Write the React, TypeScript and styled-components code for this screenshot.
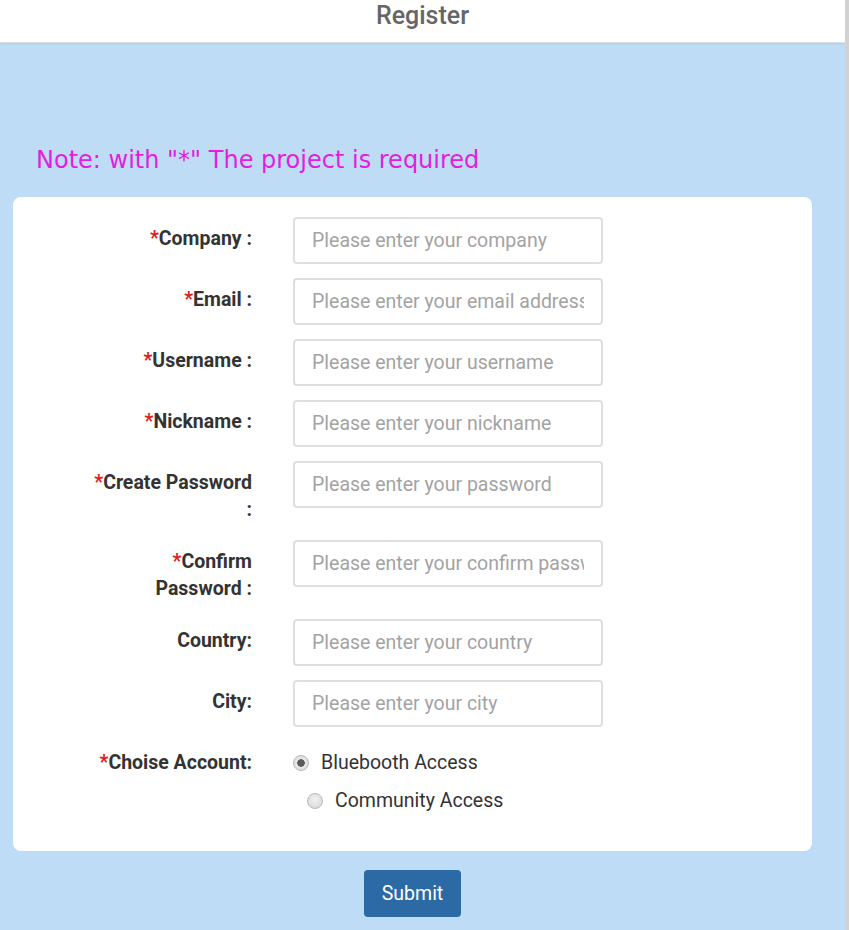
import styled, { createGlobalStyle } from "styled-components";

const GlobalStyle = createGlobalStyle`
  html, body {
    margin: 0;
    padding: 0;
    background: #ffffff;
  }
  * {
    box-sizing: border-box;
  }
`;

const Page = styled.div`
  width: 849px;
  min-height: 930px;
  border-right: 4px solid #d2d2d2;
  background-color: #bedcf6;
  font-family: Roboto, "Liberation Sans", sans-serif;
  overflow: hidden;
`;

const Header = styled.header`
  height: 43px;
  background-color: #ffffff;
  border-bottom: 1px solid #d9dfe5;
  box-shadow: 0 1px 2px rgba(0, 0, 0, 0.06);
  display: flex;
  align-items: flex-start;
  justify-content: center;
  padding-top: 1px;
`;

const Title = styled.h1`
  margin: 0;
  font-size: 25px;
  line-height: 30px;
  font-weight: 500;
  color: #666666;
`;

const Main = styled.main`
  padding: 98px 33px 0 13px;
`;

const Note = styled.p`
  margin: 0 0 18px 23px;
  font-family: "DejaVu Sans", Tahoma, sans-serif;
  font-size: 24px;
  line-height: 38px;
  color: #e21ee0;
`;

const Card = styled.div`
  background-color: #ffffff;
  border-radius: 8px;
  padding: 20px 0 24px;
`;

const Row = styled.div`
  display: grid;
  grid-template-columns: 239px 310px;
  column-gap: 41px;
  align-items: start;
  margin-bottom: 14px;
`;

const Label = styled.label`
  text-align: right;
  font-size: 19.5px;
  font-weight: 700;
  color: #333333;
  line-height: 27px;
  padding: 8px 0 3px 76px;
`;

const Star = styled.span`
  color: #d9201a;
`;

const Input = styled.input`
  width: 310px;
  height: 47px;
  padding: 0 17px;
  border: 2px solid #dedede;
  border-radius: 4px;
  font-family: Roboto, "Liberation Sans", sans-serif;
  font-size: 19.5px;
  color: #333333;
  background-color: #ffffff;
  outline: none;

  &::placeholder {
    color: #a3a3a3;
  }
`;

const RadioGroup = styled.div`
  display: flex;
  flex-direction: column;
  gap: 14px;
  padding-top: 10px;
`;

const RadioOption = styled.label<{ $indent?: number }>`
  display: flex;
  align-items: center;
  gap: 12px;
  margin-left: ${(p) => p.$indent ?? 0}px;
  font-size: 19.5px;
  line-height: 24px;
  color: #333333;
`;

const Radio = styled.input`
  appearance: none;
  margin: 0;
  width: 16px;
  height: 16px;
  border-radius: 50%;
  border: 1px solid #b9b9b9;
  background: radial-gradient(circle at 50% 40%, #f2f2f2, #d4d4d4);

  &:checked {
    background: radial-gradient(
      circle,
      #5a5a5a 0 3.5px,
      #eaeaea 4px,
      #d2d2d2 100%
    );
  }
`;

const Actions = styled.div`
  display: flex;
  justify-content: center;
  padding: 19px 0 20px;
`;

const SubmitButton = styled.button`
  width: 97px;
  height: 47px;
  border: none;
  border-radius: 4px;
  background-color: #2c6aa5;
  color: #ffffff;
  font-family: Roboto, "Liberation Sans", sans-serif;
  font-size: 19.5px;
  cursor: pointer;
`;

type Field = {
  label: string;
  placeholder: string;
  required?: boolean;
  type?: string;
};

const fields: Field[] = [
  { label: "Company :", placeholder: "Please enter your company", required: true },
  { label: "Email :", placeholder: "Please enter your email address", required: true },
  { label: "Username :", placeholder: "Please enter your username", required: true },
  { label: "Nickname :", placeholder: "Please enter your nickname", required: true },
  { label: "Create Password :", placeholder: "Please enter your password", required: true, type: "password" },
  { label: "Confirm Password :", placeholder: "Please enter your confirm password", required: true, type: "password" },
  { label: "Country:", placeholder: "Please enter your country" },
  { label: "City:", placeholder: "Please enter your city" },
];

const App = () => {
  return (
    <>
      <GlobalStyle />
      <Page>
        <Header>
          <Title>Register</Title>
        </Header>
        <Main>
          <Note>Note: with "*" The project is required</Note>
          <Card>
            {fields.map((f) => (
              <Row key={f.label}>
                <Label>
                  {f.required && <Star>*</Star>}
                  {f.label}
                </Label>
                <Input type={f.type ?? "text"} placeholder={f.placeholder} />
              </Row>
            ))}
            <Row>
              <Label>
                <Star>*</Star>Choise Account:
              </Label>
              <RadioGroup>
                <RadioOption>
                  <Radio type="radio" name="account" defaultChecked />
                  Bluebooth Access
                </RadioOption>
                <RadioOption $indent={14}>
                  <Radio type="radio" name="account" />
                  Community Access
                </RadioOption>
              </RadioGroup>
            </Row>
          </Card>
          <Actions>
            <SubmitButton>Submit</SubmitButton>
          </Actions>
        </Main>
      </Page>
    </>
  );
};

export default App;
